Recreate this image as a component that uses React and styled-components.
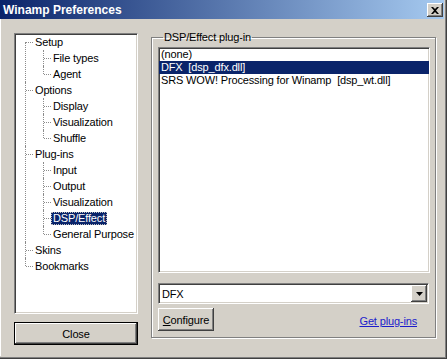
import React from "react";
import styled, { createGlobalStyle, css } from "styled-components";

const GlobalStyle = createGlobalStyle`
  html, body {
    margin: 0;
    padding: 0;
    background: #d4d0c8;
  }
  body {
    font-family: "Liberation Sans", Arial, sans-serif;
    font-size: 11px;
    letter-spacing: -0.15px;
    color: #000;
  }
`;

const raised = css`
  background: #d4d0c8;
  box-shadow: inset -1px -1px 0 #404040, inset 1px 1px 0 #ffffff,
    inset -2px -2px 0 #808080, inset 2px 2px 0 #d4d0c8;
`;

const sunken = css`
  border: 1px solid;
  border-color: #808080 #ffffff #ffffff #808080;
  box-shadow: inset 1px 1px 0 #404040, inset -1px -1px 0 #d4d0c8;
`;

const Window = styled.div`
  width: 447px;
  height: 359px;
  box-sizing: border-box;
  display: flex;
  flex-direction: column;
  background: #d4d0c8;
  border-right: 1px solid #404040;
  border-bottom: 1px solid #404040;
  box-shadow: inset -1px -1px 0 #808080;
  padding: 0 2px 2px 0;
`;

const TitleBar = styled.div`
  height: 19px;
  flex: none;
  display: flex;
  align-items: center;
  justify-content: space-between;
  padding: 0 1px 0 3px;
  background: linear-gradient(to right, #0a246a, #a6caf0);
  color: #fff;
  font-weight: bold;
  font-size: 12px;
  letter-spacing: 0;
`;

const CloseBox = styled.div`
  ${raised};
  width: 16px;
  height: 14px;
  display: flex;
  align-items: center;
  justify-content: center;
  margin-top: 1px;
`;

const Body = styled.div`
  flex: 1;
  display: flex;
  gap: 13px;
  padding: 13px 10px 0 13px;
  border-left: 1px solid #ffffff;
`;

const LeftColumn = styled.div`
  width: 124px;
  display: flex;
  flex-direction: column;
  gap: 8px;
  padding-top: 1px;
`;

const Tree = styled.div`
  ${sunken};
  box-sizing: border-box;
  height: 281px;
  background: #fff;
  padding-top: 0;
`;

const Branch = styled.ul`
  list-style: none;
  margin: 0 0 0 ${(p) => p.$indent}px;
  padding: 0;
`;

const Node = styled.li`
  position: relative;
  padding-left: 8px;

  &::before {
    content: "";
    position: absolute;
    left: 0;
    top: ${(p) => (p.$first ? 8 : 0)}px;
    ${(p) => (p.$last ? "height: 8px;" : "bottom: 0;")}
    border-left: 1px dotted #8c8c8c;
  }

  &::after {
    content: "";
    position: absolute;
    left: 1px;
    top: 8px;
    width: 7px;
    border-top: 1px dotted #8c8c8c;
  }
`;

const Row = styled.div`
  height: 16px;
  display: flex;
  align-items: center;
`;

const Label = styled.span`
  padding: 0 2px;
  line-height: 13px;
  white-space: nowrap;
  ${(p) =>
    p.$selected &&
    css`
      background: #0a246a;
      color: #fff;
      outline: 1px dotted #c0c0c0;
      outline-offset: -1px;
    `}
`;

const Button = styled.button`
  ${raised};
  border: none;
  font-family: "Liberation Sans", Arial, sans-serif;
  font-size: 11px;
  letter-spacing: -0.15px;
  color: #000;
  padding: 0;
  height: ${(p) => p.$height || 23}px;
  width: ${(p) => p.$width}px;

  ${(p) =>
    p.$default &&
    css`
      border: 1px solid #000;
    `}

  u {
    text-decoration: underline;
  }
`;

const GroupBox = styled.fieldset`
  margin: -1px 0 0 0;
  padding: 3px 5px 4px 6px;
  width: 286px;
  box-sizing: border-box;
  height: 307px;
  border: 1px solid #808080;
  box-shadow: inset 1px 1px 0 #fff, 1px 1px 0 #fff;
  display: flex;
  flex-direction: column;
`;

const Legend = styled.legend`
  padding: 0 1px;
  margin-left: 5px;
  line-height: 13px;
`;

const ListBox = styled.div`
  ${sunken};
  box-sizing: border-box;
  height: 226px;
  width: 272px;
  background: #fff;
`;

const ListItem = styled.div`
  height: 13px;
  line-height: 13px;
  padding-left: 2px;
  white-space: pre;
  ${(p) =>
    p.$selected &&
    css`
      background: #0a246a;
      color: #fff;
    `}
`;

const Combo = styled.div`
  ${sunken};
  box-sizing: border-box;
  margin-top: 10px;
  width: 271px;
  height: 21px;
  background: #fff;
  display: flex;
  align-items: center;
  justify-content: space-between;
  padding: 1px;
`;

const ComboText = styled.span`
  padding-left: 2px;
`;

const DropButton = styled.div`
  ${raised};
  width: 16px;
  height: 17px;
  display: flex;
  align-items: center;
  justify-content: center;
`;

const Footer = styled.div`
  margin-top: 4px;
  display: flex;
  align-items: center;
  justify-content: space-between;
  padding-right: 13px;
`;

const Link = styled.a`
  color: #1c1ccc;
  text-decoration: underline;
  margin-top: 3px;
`;

const tree = [
  { label: "Setup", children: ["File types", "Agent"] },
  { label: "Options", children: ["Display", "Visualization", "Shuffle"] },
  {
    label: "Plug-ins",
    children: ["Input", "Output", "Visualization", "DSP/Effect", "General Purpose"],
  },
  { label: "Skins" },
  { label: "Bookmarks" },
];

const selectedItem = "DSP/Effect";

const plugins = [
  "(none)",
  "DFX  [dsp_dfx.dll]",
  "SRS WOW! Processing for Winamp  [dsp_wt.dll]",
];

const App = () => {
  return (
    <>
      <GlobalStyle />
      <Window>
        <TitleBar>
          <span>Winamp Preferences</span>
          <CloseBox>
            <svg width="8" height="7" viewBox="0 0 8 7">
              <path
                d="M0 0h2l2 2 2-2h2L5 3.5 8 7H6L4 5 2 7H0l3-3.5z"
                fill="#000"
              />
            </svg>
          </CloseBox>
        </TitleBar>
        <Body>
          <LeftColumn>
            <Tree>
              <Branch $indent={10}>
                {tree.map((node, i) => (
                  <Node
                    key={node.label}
                    $first={i === 0}
                    $last={i === tree.length - 1}
                  >
                    <Row>
                      <Label>{node.label}</Label>
                    </Row>
                    {node.children && (
                      <Branch $indent={10}>
                        {node.children.map((child, j) => (
                          <Node
                            key={child + j}
                            $last={j === node.children.length - 1}
                          >
                            <Row>
                              <Label $selected={child === selectedItem}>
                                {child}
                              </Label>
                            </Row>
                          </Node>
                        ))}
                      </Branch>
                    )}
                  </Node>
                ))}
              </Branch>
            </Tree>
            <Button $default $height={23} $width={124}>
              Close
            </Button>
          </LeftColumn>
          <GroupBox>
            <Legend>DSP/Effect plug-in</Legend>
            <ListBox>
              {plugins.map((p, i) => (
                <ListItem key={p} $selected={i === 1}>
                  {p}
                </ListItem>
              ))}
            </ListBox>
            <Combo>
              <ComboText>DFX</ComboText>
              <DropButton>
                <svg width="7" height="4" viewBox="0 0 7 4">
                  <path d="M0 0h7L3.5 4z" fill="#000" />
                </svg>
              </DropButton>
            </Combo>
            <Footer>
              <Button $width={56}>
                <u>C</u>onfigure
              </Button>
              <Link href="#get">Get plug-ins</Link>
            </Footer>
          </GroupBox>
        </Body>
      </Window>
    </>
  );
};

export default App;
